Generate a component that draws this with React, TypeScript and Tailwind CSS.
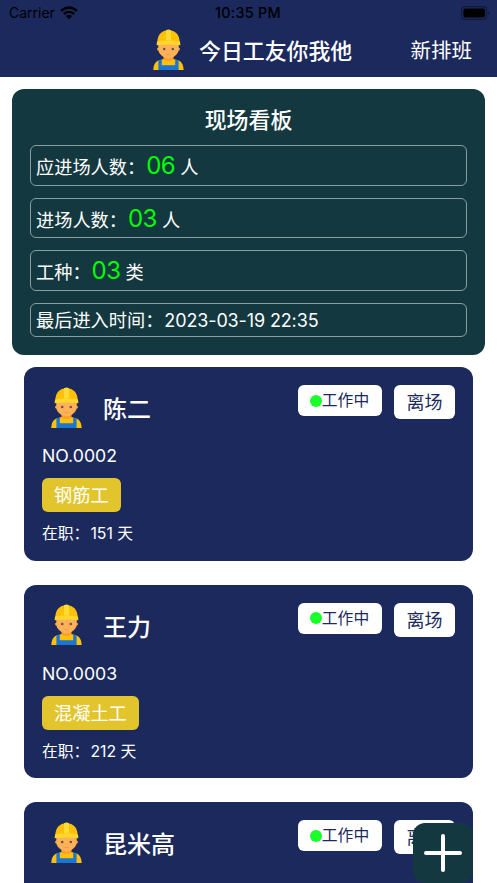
import React from 'react';

interface Worker {
  name: string;
  no?: string;
  job?: string;
  days?: number;
}

const workers: Worker[] = [
  { name: '陈二', no: '0002', job: '钢筋工', days: 151 },
  { name: '王力', no: '0003', job: '混凝土工', days: 212 },
  { name: '昆米高' },
];

const stats = [
  { label: '应进场人数：', value: '06', unit: '人' },
  { label: '进场人数：', value: '03', unit: '人' },
  { label: '工种：', value: '03', unit: '类' },
];

const WorkerIcon = () => (
  <svg width="31" height="41" viewBox="0 0 31 41" className="-mt-[2px] shrink-0">
    {/* neck */}
    <path d="M10.500 25h10v6l-5 3-5-3z" fill="#ff9e2e" />
    {/* ears + face */}
    <circle cx="5.500" cy="20" r="1.500" fill="#ffa030" />
    <circle cx="25.500" cy="20" r="1.500" fill="#ffa030" />
    <path d="M5.300 13h20.400v8c0 3.500-5.500 8.500-10.200 8.500S5.300 24.500 5.300 21z" fill="#ffb157" />
    <circle cx="11.200" cy="20" r="1.300" fill="#66564a" />
    <circle cx="19.800" cy="20" r="1.300" fill="#66564a" />
    <path d="M13.500 25.300q2 .9 4 0" stroke="#fb9544" strokeWidth="1" fill="none" />
    {/* helmet */}
    <path d="M4.300 13.500C4.300 6 8.500 1.200 15.500 1.200S26.700 6 26.700 13.500z" fill="#ffc107" />
    <path d="M13 1.300Q15.500-.4 18 1.300V11.500H13z" fill="#ffdb36" />
    <path d="M4 12.400Q15.500 10.800 27 12.400L27.400 16.200Q15.500 14.600 3.600 16.200z" fill="#fdd62f" />
    {/* shirt and overalls */}
    <path d="M.3 41c.3-5.400 2-8.400 5.200-9.600l5-1.500c2 2.800 8 2.800 10 0l5 1.500c3.200 1.200 4.900 4.200 5.200 9.600z" fill="#ffc107" />
    <path d="M5.400 31.500l3.400-.9v5.600h13.400v-5.600l3.400.9V41H5.400z" fill="#1976d2" />
  </svg>
);

const StatusBar = () => (
  <div className="grid h-[26px] grid-cols-3 items-center pl-[9px] pr-[7px] text-black">
    <div className="flex items-center gap-[5px]">
      <span className="text-[14px] leading-[26px]">Carrier</span>
      <svg width="18" height="14" viewBox="0 0 18 14">
        <path d="M1 4.900Q9-2 17 4.900" stroke="currentColor" strokeWidth="2.500" fill="none" />
        <path d="M3.800 8Q9 3.700 14.200 8" stroke="currentColor" strokeWidth="2.300" fill="none" />
        <path d="M5.900 10.100Q9 7.500 12.100 10.100L9 13.300z" fill="currentColor" />
      </svg>
    </div>
    <span className="pr-[3px] text-center text-[14.400px] font-medium leading-[26px] tracking-[0.250px]">10:35 PM</span>
    <svg width="29" height="14" viewBox="0 0 29 14" className="justify-self-end">
      <rect x=".6" y=".6" width="25" height="12.800" rx="3.500" fill="none" stroke="#12193a" strokeWidth="1.200" />
      <rect x="2.400" y="2.400" width="21.500" height="9.200" rx="2" fill="#000" />
      <path d="M27.200 5v4q1.300-.6 1.300-2t-1.300-2z" fill="#12193a" />
    </svg>
  </div>
);

const Header = () => (
  <header className="h-[77px] bg-[#1b295d]">
    <StatusBar />
    <div className="flex h-[48px] items-center justify-between pl-[153px] pr-[25px]">
      <div className="flex items-center gap-[15px]">
        <WorkerIcon />
        <h1 className="pt-px text-[21.900px] font-medium leading-[30px]">今日工友你我他</h1>
      </div>
      <button className="pt-[2px] text-[20.500px] leading-[30px]">新排班</button>
    </div>
  </header>
);

const Board = () => (
  <section className="mx-3 mt-3 flex flex-col gap-3 rounded-[12px] bg-[#14383f] px-[18px] pb-[18px] pt-[15px]">
    <h2 className="h-[29px] text-center text-[21.900px] font-medium leading-[32px]">现场看板</h2>
    {stats.map((s) => (
      <div key={s.label} className="flex h-[40.700px] items-baseline rounded-[6px] border border-[#8b9da0] pl-[5px] text-[18.200px] leading-[40px]">
        <span>{s.label}</span>
        <span className="ml-px text-[24px] tracking-[-0.500px] text-[#00ff00]">{s.value}</span>
        <span className="ml-[5px]">{s.unit}</span>
      </div>
    ))}
    <div className="flex h-[34px] rounded-[6px] border border-[#8b9da0] pl-[5px] text-[18.200px] leading-[33px]">
      <span>最后进入时间：</span>
      <span className="ml-px text-[18px] tracking-[-0.130px]">2023-03-19 22:35</span>
    </div>
  </section>
);

const WorkerCard = ({ worker }: { worker: Worker }) => (
  <article className="h-[193.600px] shrink-0 rounded-[12px] bg-[#1b295d] p-[18px]">
    <div className="flex items-start">
      <div className="flex h-[46px] flex-1 items-center gap-[21px] pl-[9px]">
        <WorkerIcon />
        <h3 className="pt-[4px] text-[24px] font-medium leading-[32px]">{worker.name}</h3>
      </div>
      <div className="flex items-start gap-3 text-[#1b295d]">
        <div className="flex h-[31px] w-[84px] items-center justify-center rounded-[6px] bg-white pr-px text-[15.800px]">
          <span className="size-3 rounded-full bg-[#1aff2c]" />
          <span className="pt-px">工作中</span>
        </div>
        <button className="h-[34px] w-[61px] rounded-[6px] bg-white text-[18px] leading-[35px]">离场</button>
      </div>
    </div>
    {worker.no && <p className="mt-[12px] text-[17.700px] leading-[26px]">NO.{worker.no}</p>}
    {worker.job && (
      <span className="mt-[9px] block h-[34px] w-fit rounded-[6px] bg-[#e2c52c] px-3 text-[18.200px] leading-[35px]">
        {worker.job}
      </span>
    )}
    {worker.days && (
      <p className="mt-[11px] text-[15.800px] leading-[22px]">
        在职：<span className="ml-px">{worker.days} 天</span>
      </p>
    )}
  </article>
);

export default function App() {
  return (
    <div className="relative h-[883px] w-full overflow-hidden bg-white font-['Inter','Noto_Sans_CJK_SC',sans-serif] text-white">
      <Header />
      <Board />
      <main className="mx-[24px] mt-3 flex flex-col gap-[24px]">
        {workers.map((w) => (
          <WorkerCard key={w.name} worker={w} />
        ))}
      </main>
      {/* floating add button */}
      <button className="absolute bottom-0 right-[24px] flex size-[60px] items-center justify-center rounded-[12px] bg-[#14383f]">
        <svg width="38" height="38" viewBox="0 0 38 38" stroke="#fff" strokeWidth="4" strokeLinecap="round">
          <path d="M19 2v34M2 19h34" />
        </svg>
      </button>
    </div>
  );
}
